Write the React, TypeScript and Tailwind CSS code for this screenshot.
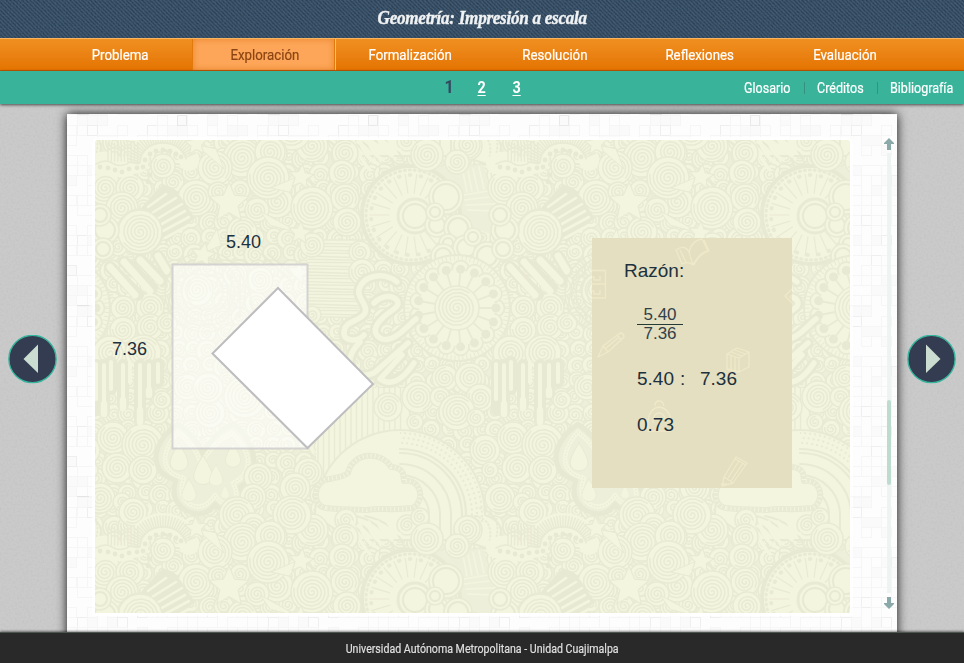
import type { ReactNode } from 'react';

const LIGHT = '#f4f5df';
const LINE = '#e9ead4';
const DARK = '#e8e9d2';
const GROUND = '#eeefda';

const stages = ['Problema', 'Exploración', 'Formalización', 'Resolución', 'Reflexiones', 'Evaluación'];

/* Spiral coordinates: centre x, centre y, radius */
const swirls: number[][] = [
  [192, 172, 9], [242, 158, 18], [270, 152, 14], [215, 168, 16], [173, 182, 10], [345, 153, 12], [342, 173, 12],
  [277, 202, 15], [312, 208, 20], [268, 178, 20], [345, 198, 13], [347, 222, 13], [257, 210, 11], [242, 232, 14],
  [196, 198, 17], [218, 192, 9], [105, 188, 16], [130, 188, 13], [122, 208, 15], [140, 232, 22], [118, 247, 8],
  [467, 145, 12], [427, 155, 15], [457, 162, 11], [123, 308, 11], [150, 307, 13], [123, 330, 12], [150, 327, 12],
  [167, 323, 9], [163, 285, 10], [110, 353, 16], [143, 353, 17], [197, 290, 15], [235, 275, 11], [260, 280, 12],
  [187, 387, 12], [210, 413, 14], [208, 388, 14], [245, 397, 20], [158, 413, 10], [162, 400, 8], [113, 438, 15],
  [143, 445, 20], [117, 468, 14], [143, 470, 13], [100, 498, 14], [122, 502, 8], [133, 512, 13], [360, 252, 10],
  [362, 272, 12], [312, 245, 11], [312, 315, 8], [445, 378, 12], [470, 378, 14], [418, 397, 15], [440, 397, 9],
  [480, 398, 13], [457, 412, 17], [476, 418, 8], [415, 422, 7], [485, 450, 14], [490, 470, 7],
];

const frontSwirls: number[][] = [
  [258, 477, 13], [308, 472, 13], [295, 488, 14], [253, 497, 12], [312, 530, 15], [292, 515, 18], [237, 515, 17],
  [253, 527, 13], [273, 537, 13], [388, 407, 13], [468, 530, 13], [407, 525, 9], [420, 517, 8], [346, 520, 10],
];

const rings: number[][] = [
  [105, 230, 10], [100, 215, 7], [103, 249, 7], [446, 197, 13], [437, 225, 8], [435, 212, 5], [458, 228, 10],
  [448, 243, 5], [466, 248, 9], [473, 237, 5], [443, 256, 8], [487, 256, 10],
];

const drops: number[][] = [[179, 459, 1], [203, 472, 1.05], [233, 457, 0.85], [189, 492, 0.8], [216, 477, 0.75], [225, 493, 0.45]];

function spiralPath(cx: number, cy: number, r: number) {
  const turns = Math.max(1.6, r / 4.1);
  const steps = Math.round(turns * 14);
  let d = '';
  for (let i = 0; i <= steps; i++) {
    const t = i / steps;
    const a = t * turns * Math.PI * 2 + cx;
    const q = 1 + t * (r - 2.5);
    d += `${i ? 'L' : 'M'}${(cx + Math.cos(a) * q).toFixed(1)} ${(cy + Math.sin(a) * q).toFixed(1)}`;
  }
  return d;
}

function Swirl({ cx, cy, r }: { cx: number; cy: number; r: number }) {
  return (
    <g fill="none" stroke={LINE} strokeWidth="1.5">
      <circle cx={cx} cy={cy} r={r + 1} fill={LIGHT} />
      <path d={spiralPath(cx, cy, r)} />
    </g>
  );
}

function Star({ cx, cy, r, turn = 0 }: { cx: number; cy: number; r: number; turn?: number }) {
  const pts = Array.from({ length: 10 }, (_, i) => {
    const q = i % 2 ? r * 0.46 : r;
    const a = (i * 36 - 90 + turn) * Math.PI / 180;
    return `${(cx + Math.cos(a) * q).toFixed(1)},${(cy + Math.sin(a) * q).toFixed(1)}`;
  }).join(' ');
  return <polygon points={pts} fill={LIGHT} stroke={LINE} strokeWidth="1.2" />;
}

function Rays({ cx, cy, r1, r2, n, from = 0, to = 360, w = 1.2 }: { cx: number; cy: number; r1: number; r2: number; n: number; from?: number; to?: number; w?: number }) {
  let d = '';
  for (let i = 0; i < n; i++) {
    const a = (from + ((to - from) * i) / n) * Math.PI / 180;
    d += `M${(cx + Math.cos(a) * r1).toFixed(1)} ${(cy + Math.sin(a) * r1).toFixed(1)}L${(cx + Math.cos(a) * r2).toFixed(1)} ${(cy + Math.sin(a) * r2).toFixed(1)}`;
  }
  return <path d={d} stroke={LINE} strokeWidth={w} fill="none" />;
}

function Filler() {
  const items: ReactNode[] = [];
  for (let j = 0; j < 24; j++) {
    for (let i = 0; i < 25; i++) {
      const k = (i * 37 + j * 61) % 17;
      items.push(<Swirl key={`${i}-${j}`} cx={95 + i * 16 + (k % 5)} cy={140 + j * 16 + (k % 4)} r={7 + (k % 4)} />);
    }
  }
  return <>{items}</>;
}

function Lines({ x1, x2, y1, y2, step, vertical = false }: { x1: number; x2: number; y1: number; y2: number; step: number; vertical?: boolean }) {
  let d = '';
  if (vertical) for (let x = x1; x < x2; x += step) d += `M${x} ${y1}V${y2}`;
  else for (let y = y1; y < y2; y += step) d += `M${x1} ${y}L${x2} ${y + (y % 2)}`;
  return <path d={d} stroke={LINE} strokeWidth="1.4" />;
}

function Doodles() {
  const petals = Array.from({ length: 17 }, (_, i) => (i * 360) / 17 * Math.PI / 180);
  const beads: number[][] = [
    [100, 167], [108, 168], [115, 170], [122, 172], [129, 169], [137, 168], [143, 167], [145, 160], [150, 154],
    [156, 151], [163, 150], [170, 151], [176, 154], [181, 157], [150, 175], [148, 182],
  ];
  return (
    <g strokeLinecap="round" strokeLinejoin="round">
      {/* hatched strips */}
      <rect x="307" y="240" width="62" height="78" fill={LIGHT} />
      <Lines x1={307} x2={369} y1={240} y2={318} step={3.2} />
      <rect x="316" y="388" width="92" height="90" fill={LIGHT} />
      <Lines x1={318} x2={406} y1={388} y2={478} step={5.5} vertical />
      <path d="M416 168L408 212L500 236L484 165Z" fill={GROUND} />
      <path d="M418 170l-6 28M423 171l-6 28M428 172l-6 28M433 172l-5 26M463 172l4 20M468 171l4 20M473 169l5 22M479 167l5 22M464 195l30-5M464 200l34-4M466 205l30-1M468 210l26 1" stroke={LIGHT} strokeWidth="1.5" />
      <path d="M352 138q8 22 18 32M360 138q2 18 18 26M369 138q0 14 14 22M378 138q4 12 14 18M388 138q4 10 12 12" stroke={LIGHT} strokeWidth="3.5" fill="none" />

      {/* scalloped wheel */}
      <circle cx="411" cy="215" r="49" fill={LIGHT} stroke={DARK} strokeWidth="4" />
      <circle cx="411" cy="215" r="45" fill="none" stroke={LINE} strokeWidth="3" strokeDasharray="1 4" />
      <Rays cx={411} cy={215} r1={22} r2={41} n={22} />
      <circle cx="411" cy="215" r="40" fill="none" stroke={LINE} strokeWidth="4" strokeDasharray="0.5 10.5" />
      <circle cx="415" cy="216" r="17" fill={LIGHT} stroke={LINE} strokeWidth="3" />
      <circle cx="415" cy="216" r="12" fill="none" stroke={DARK} strokeWidth="2" />

      {swirls.map(([x, y, r], i) => <Swirl key={i} cx={x} cy={y} r={r} />)}

      {/* beaded arch */}
      <path d="M96 164q10-5 18 1q8 5 18-1l6-1q2-24 25-24q22 0 26 22" fill="none" stroke={LIGHT} strokeWidth="20" />
      <Lines x1={108} x2={139} y1={143} y2={161} step={3.3} vertical />
      <Rays cx={163} cy={168} r1={25} r2={36} n={30} from={190} to={340} w={1.5} />
      <path d="M96 164q10-6 18 0q8 4 16-2l10 1q2-20 23-20q18 0 23 16" fill="none" stroke={LINE} strokeWidth="1.5" />
      {beads.map(([x, y], i) => <circle key={i} cx={x} cy={y} r="2.4" fill={DARK} />)}
      <Swirl cx={163} cy={166} r={11} />

      {/* slanted bars */}
      <path d="M141 208L163 184L176 190L195 218L166 243L158 226Z" fill={DARK} />
      <path d="M148 207l18-13M152 213l24-15M157 219l25-15M160 225l25-14M163 231l26-14M165 238l24-13" stroke={LIGHT} strokeWidth="2.6" />
      <Swirl cx={140} cy={232} r={21} />

      {/* fingers */}
      <g fill="none">
        <path d="M110 267l28 28M124 262l28 26M140 260l22 20M158 256l9 15" stroke={DARK} strokeWidth="12" />
        <path d="M110 267l25 28M124 262l26 29M140 260l20 21M158 256l9 15" stroke={LIGHT} strokeWidth="7" />
      </g>
      <g fill="none" stroke={LINE} strokeWidth="1.6">
        {[18, 23, 29, 34, 40].map((r) => <circle key={r} cx="205" cy="292" r={r} />)}
      </g>
      <Rays cx={205} cy={292} r1={30} r2={34} n={52} />

      {rings.map(([x, y, r], i) => (
        <g key={i} fill={LIGHT} stroke={LINE} strokeWidth="1.6">
          <circle cx={x} cy={y} r={r + 4} />
          <circle cx={x} cy={y} r={r} stroke={DARK} strokeWidth="2" />
        </g>
      ))}

      {/* flower with seed-head petals */}
      <circle cx="457" cy="308" r="53" fill={LIGHT} stroke={LINE} strokeWidth="2" />
      <circle cx="457" cy="308" r="50" fill="none" stroke={LINE} strokeWidth="5" strokeDasharray="1 3" strokeLinecap="butt" />
      {petals.map((a, i) => <circle key={i} cx={457 + Math.cos(a) * 39} cy={308 + Math.sin(a) * 39} r="8.5" fill={LIGHT} stroke={LINE} strokeWidth="1.8" />)}
      <circle cx="457" cy="308" r="38" fill={LIGHT} />
      {petals.map((a, i) => <circle key={i} cx={457 + Math.cos(a) * 39} cy={308 + Math.sin(a) * 39} r="4.5" fill={DARK} />)}
      <Rays cx={457} cy={308} r1={22} r2={38} n={17} w={1.8} />
      <Swirl cx={457} cy={308} r={21} />

      {/* looping ribbon */}
      <g fill="none">
        <path d="M397 282c-12-10-30-7-36 3c-8 12 8 18 4 28c-5 9-21 7-21 20c0 9 14 9 20 2M374 303c14-14 32-2 20 6c-12 8-28 22-12 30c12 4 26-14 34-20M360 342c-20 20-8 40 14 31l34-30M402 355l-22 24q16 11 34-16" stroke={DARK} strokeWidth="11" />
        <path d="M397 282c-12-10-30-7-36 3c-8 12 8 18 4 28c-5 9-21 7-21 20c0 9 14 9 20 2M374 303c14-14 32-2 20 6c-12 8-28 22-12 30c12 4 26-14 34-20M360 342c-20 20-8 40 14 31l34-30M402 355l-22 24q16 11 34-16" stroke={LIGHT} strokeWidth="5.5" />
      </g>

      {/* drips */}
      <g fill="none">
        <path d="M97 365v45M104 365v47M111 362v27M123 365v40M140 365v54M149 365v29M158 364v18" stroke={DARK} strokeWidth="12" />
        <path d="M96 364v35M104 365v47M111 362v27M123 365v42M130 362v20M140 365v54M149 365v29M158 364v18" stroke={LIGHT} strokeWidth="4" />
        <path d="M104 404v10M123 400v8M140 410v12M149 390v5" stroke={LIGHT} strokeWidth="6.5" />
      </g>

      {/* droplets and their lobed frame */}
      <path d="M178 424q20 14 26 32q8-24 30-32q18 16 20 36q2 18-14 27q8 17-6 25q-12 1-19-8q-10 15-28 7q-18-10-11-31q-20-5-20-24q2-18 22-32Z" fill={GROUND} stroke={DARK} strokeWidth="5" />
      <path d="M178 432q18 14 23 32q11-21 31-31q15 14 16 28q0 15-15 22q8 16-3 22q-10-1-15-10q-10 16-24 10q-14-8-7-27q-19-4-19-20q1-13 13-26Z" fill="none" stroke={LIGHT} strokeWidth="4.5" />
      <path d="M178 432q18 14 23 32q11-21 31-31q15 14 16 28q0 15-15 22q8 16-3 22q-10-1-15-10q-10 16-24 10q-14-8-7-27q-19-4-19-20q1-13 13-26Z" fill="none" stroke={DARK} strokeWidth="1.4" strokeDasharray="0 3" />
      {drops.map(([x, y, s], i) => (
        <path key={i} transform={`translate(${x} ${y}) scale(${s})`} d="M0-16Q9-2 9 4A9 8 0 0 1-9 4Q-8-4 0-16Z" fill={LIGHT} stroke={LINE} />
      ))}

      {/* rainbow and cloud */}
      <path d="M315 515A85 85 0 0 1 485 515Q513 525 492 550L462 540H350Z" fill={LIGHT} stroke={LINE} strokeWidth="2" />
      <g fill="none">
        {[82, 77, 72].map((r) => <circle key={r} cx="400" cy="515" r={r} stroke={LINE} strokeWidth="2" strokeDasharray="2 3" strokeLinecap="butt" clipPath="url(#upper-arc)" />)}
        {[66, 62, 51, 40, 29].map((r) => <path key={r} d={`M400 ${515 - r}A${r} ${r} 0 0 1 ${400 + r} 515V540`} stroke={LINE} strokeWidth={r > 60 ? 2.2 : 2} />)}
        <path d="M480 508q24 8 15 34M475 516q20 4 14 28" stroke={LINE} strokeWidth="2" strokeDasharray="1 3" />
      </g>
      <path d="M326 508c-16-2-12-30 4-29c7-2 13-2 18-6c5-22 34-22 43-6c15 1 12 10 13 14c18-2 21 20 9 27c-27 3-32-1-46 2c-14-1-25 0-41-2Z" fill={LIGHT} stroke={LINE} strokeWidth="6" />
      <path d="M326 508c-16-2-12-30 4-29c7-2 13-2 18-6c5-22 34-22 43-6c15 1 12 10 13 14c18-2 21 20 9 27c-27 3-32-1-46 2c-14-1-25 0-41-2Z" fill="none" stroke={LIGHT} strokeWidth="4" strokeDasharray="1 3" strokeLinecap="butt" />
      <path d="M356 516c18 4 35 18 39 38M352 520c14 6 26 18 28 34M350 524c12 6 19 17 19 30M365 516c20 4 33 14 39 30" fill="none" stroke={LINE} strokeWidth="2" />

      {frontSwirls.map(([x, y, r], i) => <Swirl key={i} cx={x} cy={y} r={r} />)}

      {/* stars and their trails */}
      <path d="M196 145l28 24l-8-20ZM301 175l-30 13l18 4ZM300 233l-40-22l10 14ZM203 253l14-24l4 16Z" fill={LIGHT} stroke={LINE} />
      <Star cx={229} cy={203} r={21} />
      <Star cx={301} cy={177} r={13} turn={8} />
      <Star cx={196} cy={144} r={12} turn={-4} />
      <Star cx={300} cy={233} r={12} turn={6} />
      <Star cx={203} cy={255} r={13} turn={10} />
      <Star cx={298} cy={273} r={12} turn={12} />
      <path d="M232 275l-4 42M240 275v42M247 274l6 40M262 254l30 28M268 254l28 24" stroke={LINE} strokeWidth="2" />
    </g>
  );
}

function Wallpaper() {
  const tiles = [-384, 0, 384].flatMap((y) => [-400, 0, 400].map((x) => [x, y]));
  return (
    <svg className="absolute inset-0 h-full w-full" viewBox="95 140 755 473" preserveAspectRatio="none" aria-hidden="true">
      <defs>
        <clipPath id="upper-arc"><rect x="400" y="425" width="90" height="100" /></clipPath>
        <g id="filler"><Filler /></g>
        <g id="doodles"><Doodles /></g>
      </defs>
      {tiles.map(([x, y]) => <use key={`f${x},${y}`} href="#filler" x={x} y={y} />)}
      {tiles.map(([x, y]) => <use key={`d${x},${y}`} href="#doodles" x={x} y={y} />)}
    </svg>
  );
}

function SchoolIcons() {
  return (
    <svg className="absolute inset-0 h-full w-full" viewBox="592 238 200 250" fill="none" stroke="#efe9c9" strokeWidth="1.3" strokeLinejoin="round" aria-hidden="true">
      <path d="M676 250q9-6 13 2q3-12 13-13l6 12q-9 2-15 14q-5-4-11-1ZM689 252l4 13M680 250l6 12M704 240l5 11q-10 3-15 14" />
      <path d="M592 270.500h13.500v27.500H592M592 284h13.500M592 277h2v3h6v-4M592 291h2v3h6v-4" />
      <path d="M598 357l5-11l17-13q4 0 4 4l-16 15ZM603 346l5 6M617 335l4 5M606 348l12-10" />
      <path d="M792 289l-7 7l7 7M792 295l-2 2l2 2" />
      <path d="M727 354l10-6l12 4v15l-10 5l-12-3ZM727 354l12 4l10-6M739 358v14M731 355v15M735 357v14M731 352l11 4M735 350l10 4" />
      <path d="M648 431v-11q2-12 11-13q10 1 12 13v11ZM655 406q0-5 4-5t5 5M653 423q0-10 6-10t7 10" />
      <path d="M724 477l12-20l11 6l-14 20l-11 3ZM724 477l9 6M735 459l11 6M739 461l-11 17M743 463l-12 18M721 484h6" />
    </svg>
  );
}

function Denim() {
  return (
    <svg className="absolute inset-0 h-full w-full" aria-hidden="true">
      <defs>
        <pattern id="twill" width="4" height="4" patternUnits="userSpaceOnUse">
          <path d="M-1-1L5 5M-1 3l2 2M3-1l2 2" stroke="#48637a" strokeWidth=".8" opacity=".55" />
          <path d="M0 2l2 2M2 0l2 2" stroke="#22374c" strokeWidth=".9" opacity=".7" />
        </pattern>
        <filter id="weave"><feTurbulence type="fractalNoise" baseFrequency=".6" numOctaves="2" seed="4" /><feColorMatrix values="0 0 0 0 .1 0 0 0 0 .18 0 0 0 0 .28 0 0 0 .7 -.18" /></filter>
      </defs>
      <rect width="100%" height="100%" fill="url(#twill)" />
      <rect width="100%" height="100%" filter="url(#weave)" opacity=".8" />
    </svg>
  );
}

function Concrete() {
  return (
    <svg className="absolute inset-0 h-full w-full" aria-hidden="true">
      <defs>
        <filter id="grain"><feTurbulence type="fractalNoise" baseFrequency=".45" numOctaves="3" seed="8" /><feColorMatrix values="0 0 0 0 .35 0 0 0 0 .35 0 0 0 0 .35 0 0 0 .8 -.32" /></filter>
      </defs>
      <rect width="100%" height="100%" filter="url(#grain)" opacity=".35" />
    </svg>
  );
}

/* Faint embossed blocks scattered on a ten-pixel grid */
function PaperTexture() {
  const blocks: number[][] = [];
  for (let j = 0; j < 19; j++) {
    for (let i = 0; i < 19; i++) {
      const k = (i * i * 7 + j * 29 + i * j * 13) % 23;
      if (k < 12) blocks.push([i * 10, j * 10, k]);
    }
  }
  return (
    <svg className="absolute inset-0 h-full w-full" aria-hidden="true">
      <defs>
        <pattern id="blocks" x="10" y="1" width="191" height="191" patternUnits="userSpaceOnUse">
          {blocks.map(([x, y, k]) => (
            <rect key={`${x}-${y}`} x={x + 0.5} y={y + 0.5} width={k % 4 === 0 ? 20 : 10} height="10" fill={k % 5 === 0 ? '#fafafa' : 'none'} stroke={k === 3 ? '#efefef' : '#f6f6f6'} />
          ))}
          <rect x="100.500" y=".5" width="9" height="10" fill="none" stroke="#e9e9e9" />
          <path d="M150 99.500h9M0 190.500h12" stroke="#e4e4e4" />
        </pattern>
      </defs>
      <rect width="100%" height="100%" fill="url(#blocks)" />
    </svg>
  );
}

function RoundArrow({ flip = false }: { flip?: boolean }) {
  return (
    <button className="relative mt-[231px] block h-[49px] w-[49px] shrink-0" aria-label={flip ? 'Siguiente' : 'Anterior'}>
      <svg width="49" height="49" viewBox="0 0 49 49">
        <circle cx="24.500" cy="24" r="23.600" fill="#343c52" stroke="#35b59b" strokeWidth="1.400" />
        <path d={flip ? 'M19 9.500L33.500 24L19 38Z' : 'M30 9.500L15.500 24L30 38Z'} fill="#cbddd0" />
      </svg>
    </button>
  );
}

function ScrollArrow({ down = false }: { down?: boolean }) {
  return (
    <svg width="10" height="12" viewBox="0 0 10 12" className="shrink-0" fill="#8ba9a9">
      <path d={down ? 'M3 0h4v6h3v1L5 12L0 7V6h3Z' : 'M3 12h4V6h3V5L5 0L0 5v1h3Z'} />
    </svg>
  );
}

export default function App() {
  return (
    <div className="flex h-[663px] w-[964px] flex-col overflow-hidden bg-[#cacaca] font-['Roboto',sans-serif]">
      <header className="relative flex h-[38px] shrink-0 items-center justify-center bg-[#34495e]">
        <Denim />
        <h1 className="relative scale-x-[0.9] whitespace-nowrap pb-[3px] font-['Liberation_Serif',serif] text-[19px] font-bold italic leading-none tracking-[-0.3px] text-[#f0f2f3] [-webkit-text-stroke:0.4px_#f0f2f3]">Geometría: Impresión a escala</h1>
      </header>

      <nav className="flex h-[33px] shrink-0 border-b border-t border-b-[#c95a00] border-t-[#f8b560] bg-linear-to-b from-[#f09020] to-[#e47400] pl-[47px]">
        {stages.map((stage) => (
          <div key={stage} className="flex w-[145px] justify-center">
            <a className={stage === 'Exploración'
              ? 'mr-[2px] flex w-full items-center justify-center border-x border-[#e17a0c] bg-[#fda65a] pl-[3px] text-[#8b4513] shadow-[inset_0_0_7px_#e98528,1px_0_0_#fdbd74]'
              : 'flex w-full items-center justify-center pl-[1px] text-white'}>
              <span className="scale-x-[0.885] whitespace-nowrap pt-[2px] text-[15px] [-webkit-text-stroke:0.2px_currentColor]">{stage}</span>
            </a>
          </div>
        ))}
      </nav>

      <div className="relative z-10 grid h-[33px] shrink-0 grid-cols-[1fr_100px_1fr] items-center bg-[#39b49b] pt-[1px] text-white shadow-[0_1px_3px_rgba(0,0,0,0.65)]">
        <span />
        <div className="flex items-center justify-between pl-[12px] pr-[11px] text-[16px] font-bold">
          <span className="mb-[2px] w-2 scale-x-90 text-center text-[18px] leading-6 text-[#34495e]">1</span>
          <a className="scale-x-90 underline underline-offset-2">2</a>
          <a className="scale-x-90 underline underline-offset-2">3</a>
        </div>
        <div className="flex items-center justify-end pr-[9px] text-[14px] [-webkit-text-stroke:0.2px_currentColor]">
          <a className="w-[48px] whitespace-nowrap"><span className="inline-block origin-left scale-x-[0.895]">Glosario</span></a>
          <span className="mx-[12px] h-3 w-px bg-[#36917f]" />
          <a className="w-[48px] whitespace-nowrap"><span className="inline-block origin-left scale-x-[0.895]">Créditos</span></a>
          <span className="mx-[12px] h-3 w-px bg-[#36917f]" />
          <a className="w-[65px] whitespace-nowrap"><span className="inline-block origin-left scale-x-[0.895]">Bibliografía</span></a>
        </div>
      </div>

      <main className="relative flex min-h-0 flex-1 justify-between px-[8px]">
        <Concrete />
        <RoundArrow />
        <section className="relative mt-[10px] flex h-[530px] w-[830px] bg-[#fdfdfd] pl-[28px] pt-[26px] shadow-[0_0_10px_rgba(0,0,0,0.9)]">
          <PaperTexture />
          <div className="relative h-[473px] w-[755px] shrink-0 overflow-hidden rounded-tl-sm rounded-tr-sm bg-[#eeefda] outline-3 outline-white/75">
            <Wallpaper />
            <svg className="absolute inset-0 h-full w-full" viewBox="95 140 755 473" aria-hidden="true">
              <rect x="172.500" y="264.500" width="135" height="184" fill="#fff" fillOpacity=".58" stroke="#c9c8cb" strokeOpacity=".75" strokeWidth="2" />
              <path d="M278 288L373 384L307.500 448L212.500 353.500Z" fill="#fff" stroke="#bebdc0" strokeWidth="2" />
            </svg>
            <span className="absolute left-[131px] top-[91px] font-['Liberation_Sans',sans-serif] text-[18px] leading-[22px] text-[#1d303e]">5.40</span>
            <span className="absolute left-[17px] top-[198px] font-['Liberation_Sans',sans-serif] text-[18px] leading-[22px] text-[#1d303e]">7.36</span>
            <aside className="absolute left-[497px] top-[98px] flex h-[250px] w-[200px] flex-col bg-[#e3dfc0] pl-[32px] pt-[22px] font-['Liberation_Sans',sans-serif] text-[19px] leading-[22px] text-[#1d303e]">
              <SchoolIcons />
              <h2 className="relative">Razón:</h2>
              <div className="relative ml-[13px] mt-[23px] flex w-[46px] flex-col text-center text-[17px] leading-[19px] text-[#333f49]">
                <span className="h-[20px] border-b border-[#263b36]">5.40</span>
                <span className="-mt-px">7.36</span>
              </div>
              <div className="relative ml-[13px] mt-[25px] flex whitespace-pre"><span className="w-[43px]">5.40</span><span className="w-[20px]">:</span><span>7.36</span></div>
              <div className="relative ml-[13px] mt-[24px]">0.73</div>
            </aside>
          </div>
          <div className="relative ml-[33px] flex h-[473px] w-[12px] flex-col items-center">
            <div className="-mt-[2px]"><ScrollArrow /></div>
            <div className="mt-[3px] flex h-[440px] w-[4px] flex-col bg-[#edf4f1] pt-[247px]"><div className="h-[85px] rounded-sm bg-[#bddccf]" /></div>
            <div className="mt-[4px]"><ScrollArrow down /></div>
          </div>
        </section>
        <RoundArrow flip />
      </main>

      <footer className="relative z-10 flex h-[31px] shrink-0 items-center justify-center border-t border-[#4d5551] bg-[#292929] pt-[2px] text-[12px] text-[#e1e1e1] shadow-[0_-1px_2px_rgba(0,0,0,0.45)]">
        <span className="scale-x-[0.885] whitespace-nowrap [-webkit-text-stroke:0.15px_currentColor]">Universidad Autónoma Metropolitana - Unidad Cuajimalpa</span>
      </footer>
    </div>
  );
}
